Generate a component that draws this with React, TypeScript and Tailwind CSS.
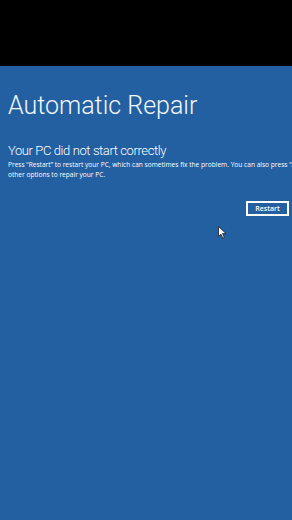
import React from 'react';

const Cursor = () => (
  <svg width="9" height="13" viewBox="0 0 9 13" className="absolute left-[218px] top-[226px]">
    <path d="M0.5 0.5 L0.5 10.5 L3 8.2 L4.8 12.2 L6.3 11.5 L4.6 7.6 L8 7.6 Z" fill="#ffffff" stroke="#1a1a1a" strokeWidth="0.8" strokeLinejoin="round" />
  </svg>
);

const App = () => {
  return (
    <div className="relative w-[292px] h-[520px] flex flex-col overflow-hidden bg-black" style={{ fontFamily: '"Open Sans", "Noto Sans", sans-serif' }}>
      {/* letterbox bar */}
      <div className="h-[66px] bg-black" />

      {/* recovery screen */}
      <div className="flex-1 bg-[#2360a2] text-white pl-2 overflow-hidden">
        <h1 className="mt-[22px] text-[25px] font-light leading-[36px] whitespace-nowrap text-[#f4f7fb] font-[Roboto]">
          Automatic Repair
        </h1>
        <h2 className="mt-[18px] text-[13px] font-light leading-[17px] tracking-[-0.4px] whitespace-nowrap font-[Roboto]">
          Your PC did not start correctly
        </h2>
        <p className="mt-[1px] text-[6.6px] leading-[9.5px] whitespace-nowrap">
          Press “Restart” to restart your PC, which can sometimes fix the problem. You can also press “Advanced options” to try
          <br />
          other options to repair your PC.
        </p>
        <div className="flex justify-end pr-[3px] mt-[22px]">
          <button className="w-[43px] h-[15px] border-2 border-white text-[7px] font-semibold leading-none flex items-center justify-center">
            Restart
          </button>
        </div>
      </div>

      <Cursor />
    </div>
  );
};

export default App;
